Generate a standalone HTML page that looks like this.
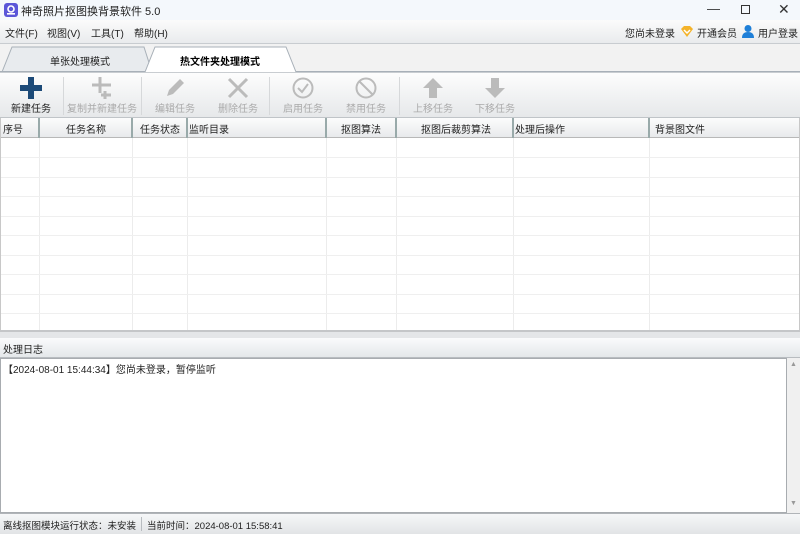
<!DOCTYPE html>
<html><head><meta charset="utf-8">
<style>
*{margin:0;padding:0;box-sizing:border-box}
body{width:800px;height:534px;overflow:hidden;background:#f0f0f0;font-family:"Liberation Sans","Noto Sans CJK SC",sans-serif;font-size:10px;color:#222;position:relative}
.abs{position:absolute}
#title{left:0;top:0;width:800px;height:20px;background:#f4f8fc}
#menu{left:0;top:20px;width:800px;height:24px;background:linear-gradient(#fbfbfb,#e9ebed);border-bottom:1px solid #c8ccd0}
#menu span{position:absolute;top:5px}
#tabs{left:0;top:44px;width:800px;height:28px;background:#f2f2f2}
#tool{left:0;top:72px;width:800px;height:46px;background:linear-gradient(#fdfdfd,#e6e8ea);border-top:1px solid #c9cdd1;border-bottom:1px solid #c0c4c8}
.tb{position:absolute;top:0;height:46px;text-align:center;font-size:10px;color:#aaa;white-space:nowrap}
.tb svg{display:block;margin:4px auto 0}
.tb div{margin-top:1px}
.sep{position:absolute;top:4px;width:1px;height:38px;background:#d6d8da}
#grid{left:0;top:118px;width:800px;height:212px;background:#fff;border-left:1px solid #c8c8c8;border-right:1px solid #c8c8c8}
#hdr{left:0;top:0;width:798px;height:20px;background:linear-gradient(#fcfcfc,#e8eaec);border-bottom:1px solid #b8b8b8}
#hdr span{position:absolute;top:3px}
.vl{position:absolute;top:0;width:1px;height:212px;background:#ececec}
.hv{position:absolute;top:0;width:2px;height:20px;background:#9aa}
.hl{position:absolute;left:0;width:798px;height:1px;background:#efefef}
#split{left:0;top:330px;width:800px;height:8px;background:#e4e6e8;border-top:2px solid #c4c6c8}
#loghdr{left:0;top:338px;width:800px;height:20px;background:linear-gradient(#fafbfc,#e4e8ea);border-bottom:1px solid #b8bcc0}
#log{left:0;top:358px;width:787px;height:155px;background:#fff;border:1px solid #a8acb0}
#sb{left:787px;top:358px;width:13px;height:155px;background:#f0f0f0}
#status{left:0;top:513px;width:800px;height:21px;background:linear-gradient(#f6f7f8,#e2e4e6);border-top:1px solid #b0b4b8}
</style></head><body>
<div id="title" class="abs">
 <svg class="abs" style="left:4px;top:3px" width="14" height="14"><rect width="14" height="14" rx="3" fill="#5a56d8"/><circle cx="7" cy="6" r="3" fill="none" stroke="#fff" stroke-width="1.6"/><rect x="3" y="10" width="8" height="1.6" fill="#fff"/></svg>
 <span class="abs" style="left:21px;top:3px;font-size:11px">神奇照片抠图换背景软件 5.0</span>
 <span class="abs" style="left:707px;top:1px;font-size:13px;color:#333">—</span>
 <div class="abs" style="left:741px;top:5px;width:9px;height:9px;border:1px solid #333"></div>
 <span class="abs" style="left:778px;top:1px;font-size:14px;color:#333">✕</span>
</div>
<div id="menu" class="abs">
 <span style="left:5px">文件(F)</span><span style="left:47px">视图(V)</span><span style="left:91px">工具(T)</span><span style="left:134px">帮助(H)</span>
 <span style="left:625px">您尚未登录</span>
 <svg class="abs" style="left:680px;top:5px" width="14" height="13"><path d="M1 4 L4 1 H10 L13 4 L7 12 Z" fill="#f4b32a"/><path d="M4 5 L7 8 L10 5" stroke="#fff" stroke-width="1.5" fill="none"/></svg>
 <span style="left:697px">开通会员</span>
 <svg class="abs" style="left:741px;top:4px" width="14" height="14"><circle cx="7" cy="4.5" r="3.5" fill="#1e7fd8"/><path d="M1 14 Q1 8 7 8 Q13 8 13 14Z" fill="#1e7fd8"/></svg>
 <span style="left:758px">用户登录</span>
</div>
<div id="tabs" class="abs">
 <svg width="800" height="28" style="position:absolute;left:0;top:0">
  <path d="M2 28 L12 3 H144 L152 28" fill="#e8ebee" stroke="#a8b0b8"/>
  <path d="M145 28 L155 3 H286 L296 28" fill="#fff" stroke="#a8b0b8"/>
  <line x1="0" y1="27.5" x2="145" y2="27.5" stroke="#a8b0b8"/>
  <line x1="296" y1="27.5" x2="800" y2="27.5" stroke="#a8b0b8"/>
 </svg>
 <span class="abs" style="left:50px;top:9px">单张处理模式</span>
 <span class="abs" style="left:180px;top:9px;font-weight:bold;color:#000">热文件夹处理模式</span>
</div>
<div id="tool" class="abs">
 <div class="tb" style="left:6px;width:50px;color:#222"><svg width="22" height="22"><rect x="8" y="0" width="6" height="22" fill="#1c4a78"/><rect x="0" y="8" width="22" height="6" fill="#1c4a78"/></svg><div>新建任务</div></div>
 <div class="sep" style="left:63px"></div>
 <div class="tb" style="left:64px;width:76px"><svg width="22" height="22"><path d="M9 0V16M1 8H20M14 14V22M10 18H20" stroke="#bbb" stroke-width="3"/></svg><div>复制并新建任务</div></div>
 <div class="sep" style="left:141px"></div>
 <div class="tb" style="left:145px;width:60px"><svg width="22" height="22"><path d="M3 19 L5 13 L16 2 L20 6 L9 17Z" fill="#bbb"/></svg><div>编辑任务</div></div>
 <div class="tb" style="left:208px;width:60px"><svg width="22" height="22"><path d="M2 2L20 20M20 2L2 20" stroke="#bbb" stroke-width="3"/></svg><div>删除任务</div></div>
 <div class="sep" style="left:269px"></div>
 <div class="tb" style="left:273px;width:60px"><svg width="22" height="22"><circle cx="11" cy="11" r="9.5" fill="none" stroke="#bbb" stroke-width="2"/><path d="M6 11L10 15L16 7" stroke="#bbb" stroke-width="2" fill="none"/></svg><div>启用任务</div></div>
 <div class="tb" style="left:336px;width:60px"><svg width="22" height="22"><circle cx="11" cy="11" r="9.5" fill="none" stroke="#bbb" stroke-width="2"/><path d="M4.5 4.5L17.5 17.5" stroke="#bbb" stroke-width="2"/></svg><div>禁用任务</div></div>
 <div class="sep" style="left:399px"></div>
 <div class="tb" style="left:403px;width:60px"><svg width="22" height="22"><path d="M11 1L21 11H15V21H7V11H1Z" fill="#bbb"/></svg><div>上移任务</div></div>
 <div class="tb" style="left:465px;width:60px"><svg width="22" height="22"><path d="M11 21L21 11H15V1H7V11H1Z" fill="#bbb"/></svg><div>下移任务</div></div>
</div>
<div id="grid" class="abs">
 <div class="vl" style="left:38px"></div><div class="vl" style="left:131px"></div><div class="vl" style="left:186px"></div><div class="vl" style="left:325px"></div><div class="vl" style="left:395px"></div><div class="vl" style="left:512px"></div><div class="vl" style="left:648px"></div>
 <div class="hl" style="top:39px"></div><div class="hl" style="top:59px"></div><div class="hl" style="top:78px"></div><div class="hl" style="top:98px"></div><div class="hl" style="top:117px"></div><div class="hl" style="top:137px"></div><div class="hl" style="top:156px"></div><div class="hl" style="top:176px"></div><div class="hl" style="top:195px"></div>
 <div id="hdr" class="abs">
  <div class="hv" style="left:37px"></div><div class="hv" style="left:130px"></div><div class="hv" style="left:185px"></div><div class="hv" style="left:324px"></div><div class="hv" style="left:394px"></div><div class="hv" style="left:511px"></div><div class="hv" style="left:647px"></div>
  <span style="left:2px">序号</span><span style="left:65px">任务名称</span><span style="left:139px">任务状态</span><span style="left:188px">监听目录</span><span style="left:340px">抠图算法</span><span style="left:420px">抠图后裁剪算法</span><span style="left:514px">处理后操作</span><span style="left:654px">背景图文件</span>
 </div>
</div>
<div id="split" class="abs"></div>
<div id="loghdr" class="abs"><span class="abs" style="left:3px;top:3px">处理日志</span></div>
<div id="log" class="abs"><span class="abs" style="left:2px;top:2px">【2024-08-01 15:44:34】您尚未登录，暂停监听</span></div>
<div id="sb" class="abs"><span class="abs" style="left:3px;top:3px;font-size:7px;color:#999">▲</span><span class="abs" style="left:3px;top:142px;font-size:7px;color:#999">▼</span></div>
<div id="status" class="abs">
 <span class="abs" style="left:3px;top:4px;font-size:9.5px">离线抠图模块运行状态：未安装</span>
 <div class="abs" style="left:141px;top:3px;width:1px;height:14px;background:#b8bcc0"></div>
 <span class="abs" style="left:147px;top:4px;font-size:9.5px">当前时间：2024-08-01 15:58:41</span>
</div>
</body></html>
